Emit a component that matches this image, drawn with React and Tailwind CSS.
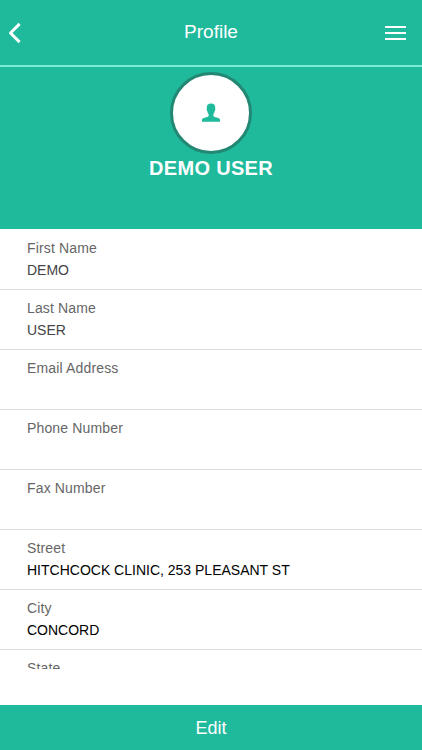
import React from 'react';

const fields = [
  { label: 'First Name', value: 'DEMO', locked: true },
  { label: 'Last Name', value: 'USER', locked: true },
  { label: 'Email Address', value: '' },
  { label: 'Phone Number', value: '' },
  { label: 'Fax Number', value: '' },
  { label: 'Street', value: 'HITCHCOCK CLINIC, 253 PLEASANT ST' },
  { label: 'City', value: 'CONCORD' },
  { label: 'State', value: '' },
];

const Header = () => (
  <header className="h-[67px] shrink-0 flex items-center justify-between border-b-2 border-[#7cecd3] bg-[#1fb99b] px-2 text-white">
    <button className="w-8" aria-label="Back">
      <svg width="14" height="22" viewBox="0 0 14 22" fill="none" stroke="currentColor" strokeWidth="3" strokeLinejoin="round">
        <path d="M11.600 1.900 L2.500 11 L11.600 20.100" />
      </svg>
    </button>
    <h1 className="text-[19px] leading-6 -mt-0.5">Profile</h1>
    <button className="w-8 flex justify-end pr-2" aria-label="Menu">
      <svg width="21" height="16" viewBox="0 0 21 16" fill="currentColor">
        <path d="M0 1h21v2H0zM0 7h21v2H0zM0 13h21v2H0z" />
      </svg>
    </button>
  </header>
);

const Summary = () => (
  <section className="h-[162px] shrink-0 flex flex-col items-center bg-[#1fb99b] pt-[4.5px]">
    <div className="w-[82px] h-[82px] rounded-full border-3 border-[#238873] bg-white flex items-center justify-center">
      <svg className="-mt-px" width="18" height="19" viewBox="0 0 18 19" fill="#1fb99b">
        <path d="M9 .5C6.200 .5 4.800 2.100 4.800 4.500V5.700C4.500 6.600 4.800 7.700 5.300 8C5.600 9.500 6.100 10.500 6.600 11V13C6.300 14 5 14.100 3.200 14.600C1 15.200 0 15.800 0 17V18.700H18V17C18 15.800 17 15.200 14.800 14.600C13 14.100 11.700 14 11.400 13V11C11.900 10.500 12.400 9.500 12.700 8C13.200 7.700 13.500 6.600 13.200 5.700V4.500C13.200 2.100 11.800 .5 9 .5Z" />
      </svg>
    </div>
    <h2 className="mt-[2.5px] text-[20px] leading-6 font-bold tracking-[0.3px] text-white">DEMO USER</h2>
  </section>
);

const Field = ({ label, value, locked }) => (
  <div className="h-[60px] flex flex-col justify-start border-b border-[#dedede] px-[27px] pt-[7px] text-[14px]">
    <span className="leading-[22px] tracking-[0.15px] text-[#666666]">{label}</span>
    <span className={locked ? 'leading-[23px] text-[#444444]' : 'leading-[23px] text-black'}>{value}</span>
  </div>
);

const App = () => {
  return (
    <div className="w-full h-screen flex flex-col overflow-hidden bg-white font-['Liberation_Sans',Arial,sans-serif]">
      <Header />
      <Summary />
      <main className="h-[440px] shrink-0 overflow-hidden pt-px">
        {fields.map((field) => (
          <Field key={field.label} {...field} />
        ))}
      </main>
      <button className="mt-auto h-[45px] shrink-0 bg-[#1fb99b] text-[18px] leading-6 text-white">Edit</button>
    </div>
  );
};

export default App;
